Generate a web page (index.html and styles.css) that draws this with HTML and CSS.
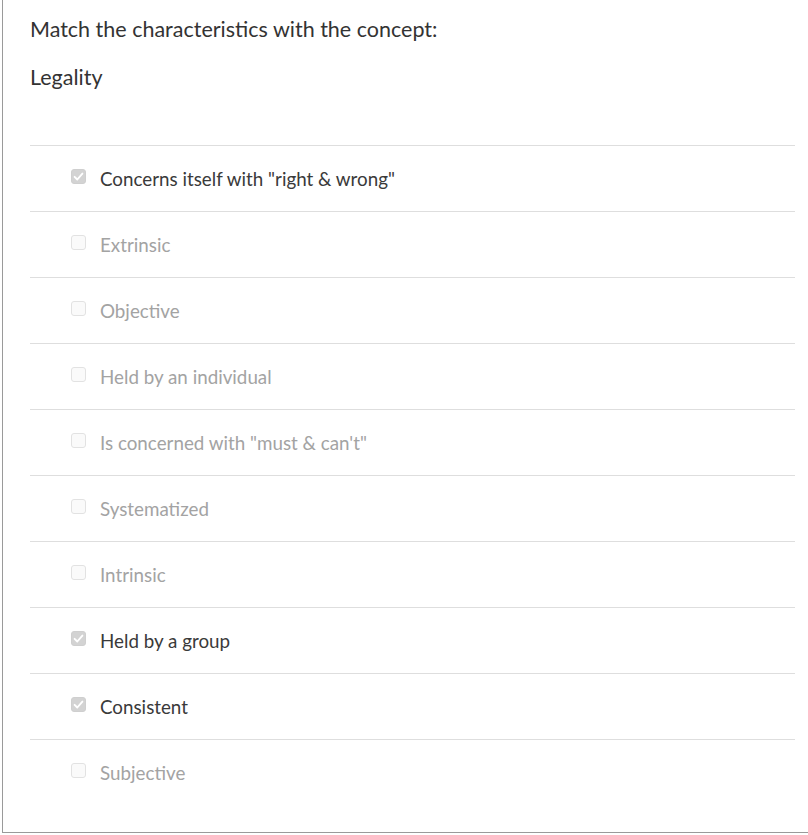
FILE: index.html
```html
<!DOCTYPE html>
<html lang="en">
<head>
<meta charset="utf-8">
<title>Legality</title>
<link rel="stylesheet" href="styles.css">
</head>
<body>
<div class="question">
  <p class="prompt">Match the characteristics with the concept:</p>
  <p class="concept">Legality</p>
  <ul class="answers">
    <li class="answer checked"><span class="box"><svg viewBox="0 0 15 15" width="15" height="15"><path d="M3.6 7.8 L6.3 10.5 L11.4 4.6" fill="none" stroke="#fff" stroke-width="1.9" stroke-linecap="round" stroke-linejoin="round"/></svg></span><span class="label">Concerns itself with "right &amp; wrong"</span></li>
    <li class="answer"><span class="box"></span><span class="label">Extrinsic</span></li>
    <li class="answer"><span class="box"></span><span class="label">Objective</span></li>
    <li class="answer"><span class="box"></span><span class="label">Held by an individual</span></li>
    <li class="answer"><span class="box"></span><span class="label">Is concerned with "must &amp; can't"</span></li>
    <li class="answer"><span class="box"></span><span class="label">Systematized</span></li>
    <li class="answer"><span class="box"></span><span class="label">Intrinsic</span></li>
    <li class="answer checked"><span class="box"><svg viewBox="0 0 15 15" width="15" height="15"><path d="M3.6 7.8 L6.3 10.5 L11.4 4.6" fill="none" stroke="#fff" stroke-width="1.9" stroke-linecap="round" stroke-linejoin="round"/></svg></span><span class="label">Held by a group</span></li>
    <li class="answer checked"><span class="box"><svg viewBox="0 0 15 15" width="15" height="15"><path d="M3.6 7.8 L6.3 10.5 L11.4 4.6" fill="none" stroke="#fff" stroke-width="1.9" stroke-linecap="round" stroke-linejoin="round"/></svg></span><span class="label">Consistent</span></li>
    <li class="answer"><span class="box"></span><span class="label">Subjective</span></li>
  </ul>
</div>
</body>
</html>
```

FILE: styles.css
```css
html, body {
  margin: 0;
  padding: 0;
  background: #fff;
}

body {
  font-family: Lato, "Open Sans", "Liberation Sans", sans-serif;
  color: #333;
}

.question {
  margin-left: 2px;
  height: 833px;
  box-sizing: border-box;
  border-left: 1px solid #9a9a9a;
  border-bottom: 1px solid #9a9a9a;
  padding: 16px 13px 0 27px;
}

.prompt,
.concept {
  margin: 0;
  font-size: 21.5px;
  line-height: 26px;
  color: #333;
}

.concept {
  margin-top: 22px;
}

.answers {
  list-style: none;
  margin: 55px 0 0;
  padding: 0;
}

.answer {
  display: flex;
  align-items: center;
  height: 65px;
  box-sizing: content-box;
  border-top: 1px solid #dedede;
  padding-left: 41px;
  font-size: 18.8px;
  color: #a3a3a3;
}

.answer.checked {
  color: #3a3a3a;
}

.box {
  flex: none;
  width: 15px;
  height: 15px;
  box-sizing: border-box;
  border: 1px solid #e2e2e2;
  border-radius: 3px;
  background: #fafafa;
  margin-right: 14px;
  margin-bottom: 4px;
  display: flex;
}

.checked .box {
  border-color: #cfcfcf;
  background: #d3d3d3;
}

.box svg {
  flex: none;
  margin: -1px;
}

.label {
  line-height: 22px;
}
```
